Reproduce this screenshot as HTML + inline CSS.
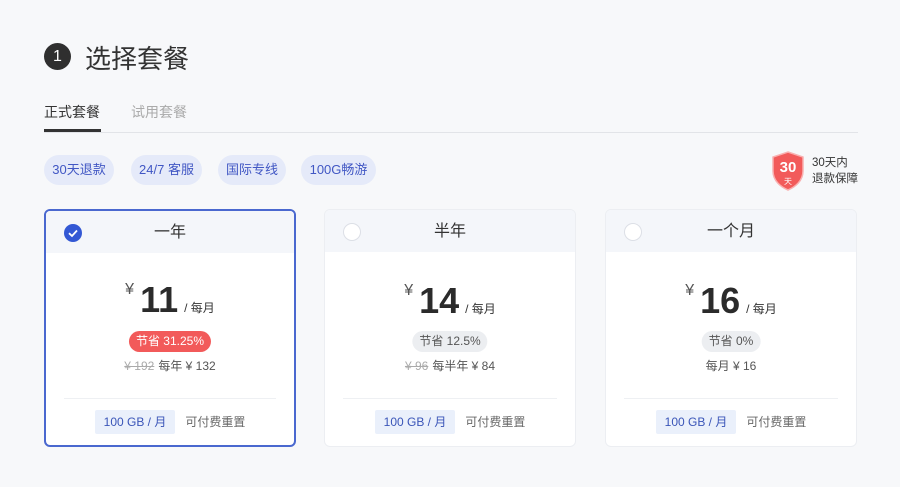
<!DOCTYPE html><html><head><meta charset="utf-8"><style>
*{margin:0;padding:0;box-sizing:border-box}
body{width:900px;height:487px;background:#f7f8fa;font-family:"Liberation Sans","Noto Sans CJK SC",sans-serif;position:relative;overflow:hidden;color:#333}
.a{position:absolute}
.pill{position:absolute;top:155px;height:30px;line-height:30px;border-radius:15px;background:#e5eaf9;color:#4157c4;font-size:13px;text-align:center}
.card{position:absolute;top:209px;width:252px;height:238px;background:#fff;border-radius:6px;border:1px solid #eceef2;overflow:hidden}
.card.sel{border:2px solid #4a68cf}
.hd{height:42px;background:#f4f6fa;text-align:center;line-height:44px;font-size:16px;color:#333}
.rad{position:absolute;left:18px;top:13px;width:18px;height:18px;border-radius:50%;border:1px solid #dcdfe6;background:#fff}
.price{position:absolute;top:70px;left:0;right:0;text-align:center;white-space:nowrap}
.price .y{font-size:16px;color:#555;vertical-align:top;position:relative;top:2px}
.price .n{font-size:36px;font-weight:bold;color:#2b2b2b;margin:0 6px}
.price .u{font-size:12px;color:#333}
.badge{position:absolute;top:121px;left:50%;transform:translateX(-50%);height:21px;line-height:21px;padding:0 7px;border-radius:11px;font-size:12px;background:#eceef1;color:#555;white-space:nowrap}
.badge.red{background:#f25a5a;color:#fff}
.old{position:absolute;top:147px;left:0;right:0;text-align:center;font-size:12px;color:#555}
.old s{color:#aaa;margin-right:4px}
.div{position:absolute;top:188px;left:18px;right:18px;height:1px;background:#eef0f3}
.bt{position:absolute;top:200px;left:0;right:0;text-align:center;font-size:12px;color:#666}
.bt span.t{display:inline-block;background:#eaf0fb;color:#3a55b8;height:24px;line-height:24px;padding:0 9px;margin-right:10px;border-radius:2px}
</style></head><body>
<div class="a" style="left:44px;top:43px;width:27px;height:27px;border-radius:50%;background:#2f2f2f;color:#fff;font-size:16px;text-align:center;line-height:27px">1</div>
<div class="a" style="left:85px;top:39px;font-size:26px;color:#333">选择套餐</div>
<div class="a" style="left:44px;top:102px;font-size:14px;color:#333">正式套餐</div>
<div class="a" style="left:131px;top:102px;font-size:14px;color:#aaa">试用套餐</div>
<div class="a" style="left:44px;top:132px;width:814px;height:1px;background:#e2e4e8"></div>
<div class="a" style="left:44px;top:129px;width:57px;height:3px;background:#333"></div>
<div class="pill" style="left:44px;width:70px">30天退款</div>
<div class="pill" style="left:131px;width:71px">24/7 客服</div>
<div class="pill" style="left:218px;width:68px">国际专线</div>
<div class="pill" style="left:301px;width:75px">100G畅游</div>
<svg class="a" style="left:771px;top:151px" width="34" height="40" viewBox="0 0 34 40"><path d="M17 1 L32 6 V20 C32 30 24 36 17 39 C10 36 2 30 2 20 V6 Z" fill="#f25a5a" stroke="#f9b0b0" stroke-width="1.5"/><text x="17" y="21" text-anchor="middle" font-size="15" font-weight="bold" fill="#fff" font-family="Liberation Sans">30</text><text x="17" y="33" text-anchor="middle" font-size="8" fill="#fff" font-family="Noto Sans CJK SC">天</text></svg>
<div class="a" style="left:812px;top:155px;font-size:11.5px;line-height:16px;color:#333">30天内<br>退款保障</div>

<div class="card sel" style="left:44px"><div class="hd">一年</div>
<svg class="a" style="left:18px;top:13px" width="18" height="18"><circle cx="9" cy="9" r="9" fill="#3358d4"/><path d="M5 9.2 L8 12 L13 6.5" stroke="#fff" stroke-width="1.8" fill="none"/></svg>
<div class="price" style="top:68px"><span class="y">¥</span><span class="n">11</span><span class="u">/ 每月</span></div>
<div class="badge red" style="top:120px">节省 31.25%</div>
<div class="old" style="top:146px"><s>¥ 192</s>每年 ¥ 132</div>
<div class="div" style="top:187px"></div>
<div class="bt" style="top:199px"><span class="t">100 GB / 月</span>可付费重置</div></div>

<div class="card" style="left:324px"><div class="hd">半年</div><div class="rad"></div>
<div class="price"><span class="y">¥</span><span class="n">14</span><span class="u">/ 每月</span></div>
<div class="badge">节省 12.5%</div>
<div class="old"><s>¥ 96</s>每半年 ¥ 84</div>
<div class="div"></div>
<div class="bt"><span class="t">100 GB / 月</span>可付费重置</div></div>

<div class="card" style="left:605px"><div class="hd">一个月</div><div class="rad"></div>
<div class="price"><span class="y">¥</span><span class="n">16</span><span class="u">/ 每月</span></div>
<div class="badge">节省 0%</div>
<div class="old">每月 ¥ 16</div>
<div class="div"></div>
<div class="bt"><span class="t">100 GB / 月</span>可付费重置</div></div>
</body></html>
